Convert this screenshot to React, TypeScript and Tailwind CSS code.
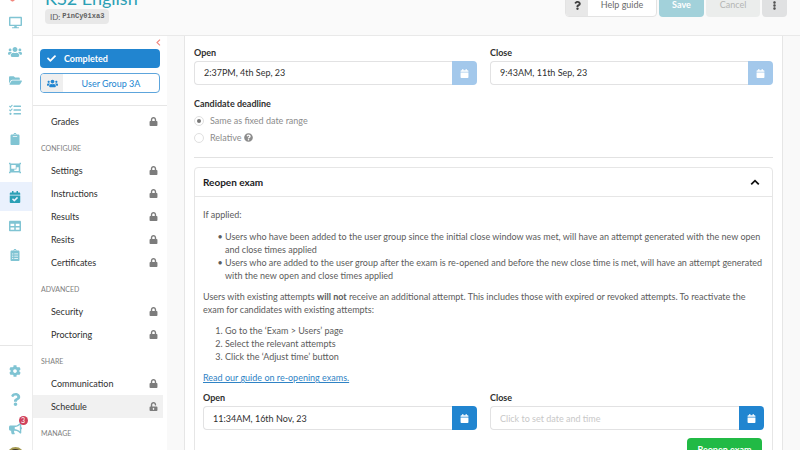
import { ReactNode } from "react";
import {
  FaBullhorn,
  FaCalendar,
  FaCalendarCheck,
  FaCheck,
  FaClipboard,
  FaClipboardList,
  FaCog,
  FaDesktop,
  FaEllipsisV,
  FaFolderOpen,
  FaLock,
  FaObjectGroup,
  FaQuestion,
  FaQuestionCircle,
  FaTable,
  FaTasks,
  FaUnlockAlt,
  FaUsers,
} from "react-icons/fa";

type TDateField = {
  id: string;
  label: string;
  value?: string;
  placeholder?: string;
  disabled?: boolean;
};

const railItems = [
  { name: "Dashboard", icon: <FaDesktop size={13} /> },
  { name: "Users", icon: <FaUsers size={14} /> },
  { name: "Library", icon: <FaFolderOpen size={13} /> },
  { name: "Tasks", icon: <FaTasks size={12} /> },
  { name: "Tests", icon: <FaClipboard size={12} /> },
  { name: "Groups", icon: <FaObjectGroup size={12} /> },
  { name: "Exams", icon: <FaCalendarCheck size={12} />, active: true },
  { name: "Tables", icon: <FaTable size={12} /> },
  { name: "Reports", icon: <FaClipboardList size={12} /> },
];

const menuSections = [
  { title: "", items: ["Grades"] },
  {
    title: "Configure",
    items: ["Settings", "Instructions", "Results", "Resits", "Certificates"],
  },
  { title: "Advanced", items: ["Security", "Proctoring"] },
  { title: "Share", items: ["Communication", "Schedule"] },
  { title: "Manage", items: [] },
];

const RailLink = ({
  name,
  active,
  children,
}: {
  name: string;
  active?: boolean;
  children: ReactNode;
}) => (
  <a
    href="#"
    aria-label={name}
    className={
      active
        ? "flex h-[29px] items-center justify-center bg-[#eaf1fd] pr-0.5 text-[#2ba0b5]"
        : "flex h-[29px] items-center justify-center pr-0.5 text-[#80c4d3]"
    }
  >
    {children}
  </a>
);

const Rail = () => (
  <nav className="flex w-[33px] shrink-0 flex-col border-r border-[#ececec] bg-white">
    <div className="flex h-2 shrink-0 items-start justify-center pr-2">
      <svg width="5" height="2" viewBox="0 0 5 2">
        <path d="M0 0h5L3 1.6H2z" fill="#f2857c" />
      </svg>
    </div>
    {railItems.map(({ name, icon, active }) => (
      <RailLink key={name} name={name} active={active}>
        {icon}
      </RailLink>
    ))}
    <div className="mt-auto border-t border-[#e6e6e6] pt-2.5">
      <RailLink name="Settings">
        <FaCog size={12} />
      </RailLink>
      <RailLink name="Help">
        <FaQuestion size={13} />
      </RailLink>
      <RailLink name="News">
        <span className="relative">
          <FaBullhorn size={13} />
          <span className="absolute -top-1.5 left-2.5 flex size-[9px] items-center justify-center rounded-full bg-[#d0405a] text-[7px] leading-none text-white">
            3
          </span>
        </span>
      </RailLink>
      <div className="flex h-[7px] justify-center overflow-hidden pt-1 pr-0.5">
        <svg width="17" height="17" viewBox="0 0 17 17" className="shrink-0">
          <circle cx="8.5" cy="8.5" r="8.5" fill="#a59a52" />
          <path d="M3 4Q8 0 14 4V17H3z" fill="#3d3426" />
        </svg>
      </div>
    </div>
  </nav>
);

const Header = () => (
  <header className="flex h-9 shrink-0 items-end justify-between border-b border-[#e9e9e9] bg-[#fafafa] pr-[13px] pl-3">
    <div className="pb-[11px]">
      <h1 className="text-[18px] leading-[22px] text-[#2ba0b5]">KS2 English</h1>
      <div className="flex h-[15px] w-fit items-center gap-0.5 rounded-sm bg-[#e8e8e8] px-[5px] text-[8px] text-[#606060]">
        ID:
        <code className="font-['Liberation_Mono',monospace] text-[7px] font-bold">
          PinCy01xa3
        </code>
      </div>
    </div>
    <div className="flex gap-0.5 pb-[18px] text-[9px]">
      <button
        type="button"
        className="flex h-6 w-[92px] items-center overflow-hidden rounded-sm border border-[#e3e3e3] bg-white text-[#6b6b6b]"
      >
        <span className="flex h-6 w-[22px] items-center justify-center bg-[#e8e8e8] text-[#404040]">
          <FaQuestion size={9} />
        </span>
        <span className="flex-1 text-center">Help guide</span>
      </button>
      <button
        type="button"
        className="h-6 w-[45px] rounded-sm bg-[#a2d1da] font-bold text-white"
      >
        Save
      </button>
      <button
        type="button"
        className="h-6 w-[54px] rounded-sm bg-[#ebedec] text-[#b3b5b4]"
      >
        Cancel
      </button>
      <button
        type="button"
        aria-label="More"
        className="flex h-6 w-[25px] items-center justify-center rounded-sm bg-[#e0e1e2] text-[#505050]"
      >
        <FaEllipsisV size={9} />
      </button>
    </div>
  </header>
);

const Sidebar = () => (
  <aside className="flex w-[134px] shrink-0 flex-col bg-white">
    <div className="px-[7px]">
      <button
        type="button"
        aria-label="Collapse menu"
        className="ml-auto flex h-[13px] w-1 items-center"
      >
        <svg width="5" height="7" viewBox="0 0 5 7" className="shrink-0">
          <path
            d="M4 .7L1 3.5l3 2.8"
            fill="none"
            stroke="#f2857c"
            strokeWidth="1.1"
          />
        </svg>
      </button>
      <button
        type="button"
        className="flex h-[19px] w-full items-center gap-2 rounded-sm bg-[#2185d0] px-[7px] text-[9px] font-bold text-white"
      >
        <FaCheck size={9} />
        Completed
      </button>
      <button
        type="button"
        className="mt-[5px] flex h-5 w-full items-center overflow-hidden rounded-sm border border-[#5da5dc] text-[9px] text-[#2185d0]"
      >
        <span className="flex h-full w-[22px] items-center justify-center bg-[#efefef]">
          <FaUsers size={11} />
        </span>
        <span className="flex-1 pt-0.5 text-center">User Group 3A</span>
      </button>
    </div>
    <div className="mt-3 border-t border-[#e6e6e6] pt-1">
      {menuSections.map(({ title, items }) => (
        <div key={title}>
          {title && (
            <h2 className="h-[26px] pt-[3px] pl-2 text-[7px] leading-6 text-[#808080] uppercase">
              {title}
            </h2>
          )}
          {items.map((item) => (
            <a
              key={item}
              href="#"
              className={
                item === "Schedule"
                  ? "mr-1 flex h-[23px] items-center justify-between bg-[#f1f1f1] pr-[5px] pl-[18px] text-[9px] text-[#303030]"
                  : "mr-1 flex h-[23px] items-center justify-between pr-[5px] pl-[18px] text-[9px] text-[#303030]"
              }
            >
              {item}
              <span className="text-[#7c7c7c]">
                {item === "Schedule" ? (
                  <FaUnlockAlt size={9} />
                ) : (
                  <FaLock size={9} />
                )}
              </span>
            </a>
          ))}
        </div>
      ))}
    </div>
  </aside>
);

const DateField = ({ id, label, value, placeholder, disabled }: TDateField) => (
  <div>
    <label
      htmlFor={id}
      className="block pb-0.5 text-[9px] leading-3 font-bold text-[#303030]"
    >
      {label}
    </label>
    <div className="flex h-6">
      <input
        type="text"
        id={id}
        defaultValue={value}
        placeholder={placeholder}
        className="min-w-0 flex-1 rounded-l-sm border border-r-0 border-[#e2e2e3] bg-white px-[9px] text-[9px] text-[#303030] placeholder:text-[#c8c8c8]"
      />
      <button
        type="button"
        aria-label={`${label} date`}
        className={
          disabled
            ? "flex w-[25px] items-center justify-center rounded-r-sm bg-[#a3c8eb] text-white"
            : "flex w-[25px] items-center justify-center rounded-r-sm bg-[#2185d0] text-white"
        }
      >
        <FaCalendar size={9} />
      </button>
    </div>
  </div>
);

const Radio = ({
  id,
  label,
  checked,
  children,
}: {
  id: string;
  label: string;
  checked?: boolean;
  children?: ReactNode;
}) => (
  <div className="flex h-[17px] items-center text-[9px] text-[#8c8c8c]">
    <input
      type="radio"
      id={id}
      name="deadline"
      defaultChecked={checked}
      className="mr-1.5 size-2.5 appearance-none rounded-full border border-[#e0e0e0] bg-clip-content p-0.5 checked:bg-[#777777]"
    />
    <label htmlFor={id}>{label}</label>
    {children}
  </div>
);

const ReopenExam = () => (
  <section className="mt-[9px] rounded-sm border border-[#e6e6e6]">
    <button
      type="button"
      className="flex h-[29px] w-full items-center justify-between border-b border-[#e6e6e6] pr-3 pl-2 text-[10px] font-bold text-[#1b1c1d]"
    >
      Reopen exam
      <svg width="10" height="7" viewBox="0 0 10 7">
        <path
          d="M1.2 5.3L5 1.7l3.8 3.6"
          fill="none"
          stroke="#111111"
          strokeWidth="1.8"
        />
      </svg>
    </button>
    <div className="px-2 pt-[11px] pb-4 text-[9px] leading-[13px] text-[#5c5c5c]">
      <p>If applied:</p>
      <ul className="mt-[9px] list-['•_'] pl-[22px]">
        <li>
          Users who have been added to the user group since the initial close
          window was met, will have an attempt generated with the new open and
          close times applied
        </li>
        <li>
          Users who are added to the user group after the exam is re-opened and
          before the new close time is met, will have an attempt generated with
          the new open and close times applied
        </li>
      </ul>
      <p className="mt-2">
        Users with existing attempts <b>will not</b> receive an additional
        attempt. This includes those with expired or revoked attempts. To
        reactivate the exam for candidates with existing attempts:
      </p>
      <ol className="mt-2 list-decimal pl-[22px]">
        <li>Go to the ‘Exam &gt; Users’ page</li>
        <li>Select the relevant attempts</li>
        <li>Click the ‘Adjust time’ button</li>
      </ol>
      <a href="#" className="mt-2 block w-fit text-[#2f83c5] underline">
        Read our guide on re-opening exams.
      </a>
      <div className="mt-2 grid grid-cols-2 gap-[13px]">
        <DateField id="reopen-open" label="Open" value="11:34AM, 16th Nov, 23" />
        <DateField
          id="reopen-close"
          label="Close"
          placeholder="Click to set date and time"
        />
      </div>
      <button
        type="button"
        className="mt-2 mr-0.5 ml-auto block h-[22px] w-[75px] rounded-sm bg-[#21ba45] text-[9px] font-bold text-white"
      >
        Reopen exam
      </button>
    </div>
  </section>
);

const App = () => {
  return (
    <div className="flex h-screen overflow-hidden bg-[#f9f9f9] font-['Lato',sans-serif]">
      <Rail />
      <div className="flex min-w-0 flex-1 flex-col">
        <Header />
        <div className="flex min-h-0 flex-1">
          <Sidebar />
          <main className="min-w-0 flex-1 px-[17px]">
            <div className="border-x border-[#e6e6e6] bg-white px-[9px] pt-[11px] pb-4">
              <div className="grid grid-cols-2 gap-[13px]">
                <DateField
                  id="open"
                  label="Open"
                  value="2:37PM, 4th Sep, 23"
                  disabled
                />
                <DateField
                  id="close"
                  label="Close"
                  value="9:43AM, 11th Sep, 23"
                  disabled
                />
              </div>
              <fieldset className="mt-[13px] border-b border-[#e2e2e2] pb-[11px]">
                <legend className="pb-0.5 text-[9px] leading-3 font-bold text-[#303030]">
                  Candidate deadline
                </legend>
                <Radio id="fixed" label="Same as fixed date range" checked />
                <Radio id="relative" label="Relative">
                  <FaQuestionCircle size={9} className="ml-[3px]" />
                </Radio>
              </fieldset>
              <ReopenExam />
            </div>
          </main>
        </div>
      </div>
    </div>
  );
};

export default App;
